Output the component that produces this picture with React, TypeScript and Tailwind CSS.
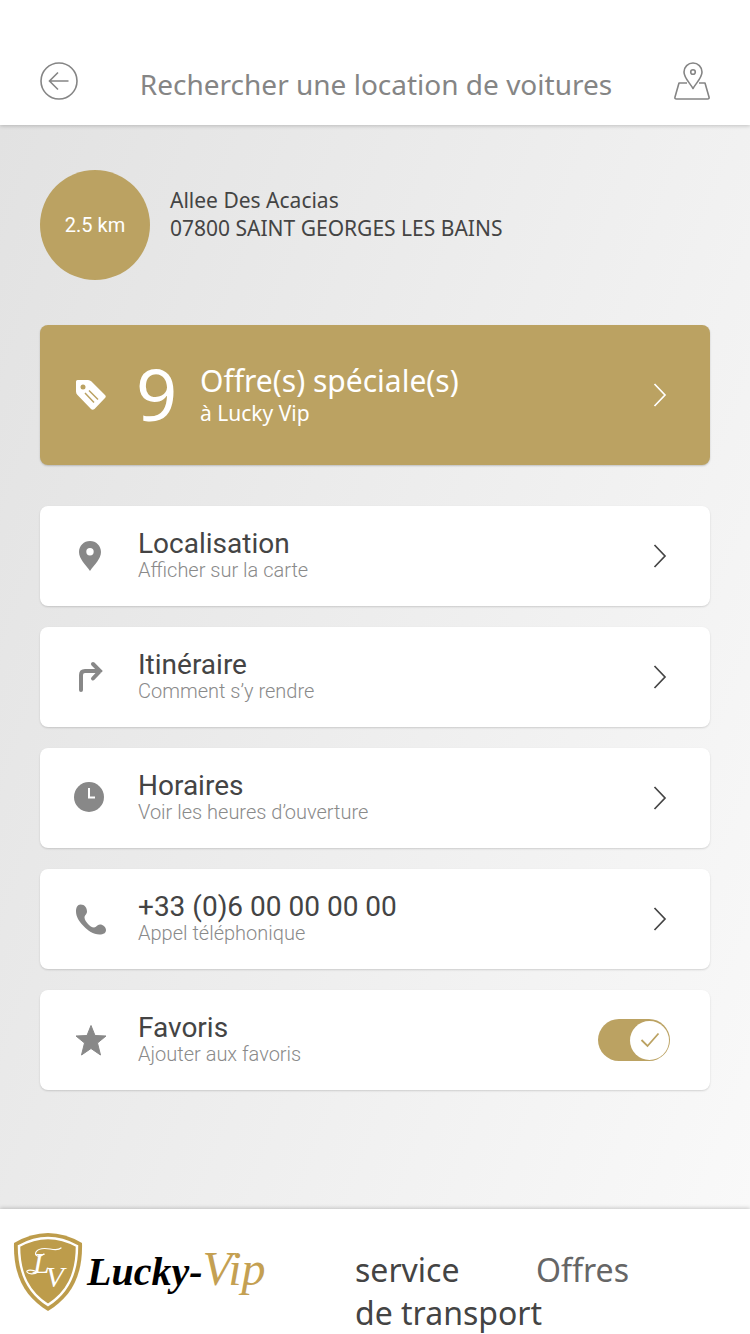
import React, { useState } from 'react';

interface ActionRow {
  id: string;
  title: string;
  subtitle: string;
  href: string;
  icon: React.ReactNode;
}

const ROWS: ActionRow[] = [
  {
    id: 'location',
    title: 'Localisation',
    subtitle: 'Afficher sur la carte',
    href: '#localisation',
    icon: (
      <path
        fillRule="evenodd"
        d="M16 1C9.900 1 5 5.800 5 12c0 7 6.500 12.500 11 19 4.500-6.500 11-12 11-19 0-6.200-4.900-11-11-11zm0 7a3.700 3.700 0 1 1 0 7.400 3.700 3.700 0 0 1 0-7.400z"
      />
    ),
  },
  {
    id: 'route',
    title: 'Itinéraire',
    subtitle: 'Comment s’y rendre',
    href: '#itineraire',
    icon: (
      <path
        d="M7 29V14q0-4 4-4H26M19 3l7 7-7 7.500"
        fill="none"
        stroke="currentColor"
        strokeWidth="4"
        strokeLinecap="round"
      />
    ),
  },
  {
    id: 'hours',
    title: 'Horaires',
    subtitle: 'Voir les heures d’ouverture',
    href: '#horaires',
    icon: (
      <>
        <circle cx="15" cy="15" r="15" />
        <path d="M15 6v9.500h6" fill="none" stroke="white" strokeWidth="2" />
      </>
    ),
  },
  {
    id: 'phone',
    title: '+33 (0)6 00 00 00 00',
    subtitle: 'Appel téléphonique',
    href: 'tel:+33600000000',
    icon: (
      <path d="M6.500 1.500C3.500 1.500 2 4.500 2 8.500c0 5 3 10 7.500 14.500S19 31.500 25.500 31.500c4 0 6.500-1.500 6.500-4.500 0-3-3-5.500-6-5.500-3 0-3.500 3-6 3-2 0-4.500-1.800-6-3.500s-3.500-4-3.500-6.500c0-2.500 2.500-3 2.500-6 0-3.500-2-7-6.500-7z" />
    ),
  },
];

function Chevron({ className }: { className: string }) {
  return (
    <svg viewBox="0 0 14 24" className={`h-6 w-3.5 shrink-0 ${className}`} fill="none" stroke="currentColor" strokeWidth="1.700" aria-hidden="true">
      <path d="M1.500 1l10.500 11L1.500 23" />
    </svg>
  );
}

function RowText({ title, subtitle }: { title: string; subtitle: string }) {
  return (
    <span className="flex flex-1 flex-col pb-1">
      <span className="text-[28px] leading-8 text-[#444444]">{title}</span>
      <span className="text-xl leading-5 font-light text-[#8a8a8a]">{subtitle}</span>
    </span>
  );
}

function Logo() {
  return (
    <a href="#accueil" className="flex items-start gap-1">
      <svg viewBox="0 0 70 78" className="h-[78px] w-[70px] shrink-0" aria-hidden="true">
        <path d="M1 10Q35-10 69 10C70 43 58 64 35 78 12 64 0 43 1 10z" fill="#bd9c4b" />
        <path d="M6 13Q35-3 64 13C64 42 54 60 35 72 16 60 6 42 6 13z" fill="none" stroke="white" strokeWidth="2.500" />
        <text x="20" y="40" fill="white" fontFamily="Liberation Serif, serif" fontStyle="italic" fontSize="30">
          L<tspan dx="-3" dy="14">V</tspan>
        </text>
        {/* Swashes around the monogram */}
        <g fill="none" stroke="white" strokeWidth="1.200" strokeLinecap="round">
          <path d="M31 21c-5 4-10 2-8-2 2-3 8-4 14-3 5 1 9 1 11-1" />
          <path d="M24 39c-5-3-11-2-10 0 2 3 8 2 11 0" />
        </g>
      </svg>
      <span className="pt-2.5 font-['Liberation_Serif',serif] text-[40px] leading-[52px] font-bold whitespace-nowrap text-black italic">
        Lucky-<span className="text-5xl leading-[52px] font-normal text-[#c4a052]">Vip</span>
      </span>
    </a>
  );
}

export default function App() {
  const [favorite, setFavorite] = useState(true);

  return (
    <div className="flex min-h-screen flex-col bg-white font-['Roboto',sans-serif]">
      <header className="relative z-10 flex h-[125px] items-center justify-between bg-white px-10 pt-9 text-[#858585] shadow-[0_1px_4px_rgba(0,0,0,0.2)]">
        <button type="button" aria-label="Retour">
          <svg viewBox="0 0 38 38" className="size-[38px]" fill="none" stroke="currentColor" strokeWidth="1.600">
            <circle cx="19" cy="19" r="18" />
            <path d="M28.500 19H10M18 10.500L9.500 19l8.500 8.500" />
          </svg>
        </button>
        <h1 className="pt-1.5 font-['Noto_Sans',sans-serif] text-[28px] leading-10">Rechercher une location de voitures</h1>
        <button type="button" aria-label="Voir la carte">
          <svg viewBox="0 0 36 38" className="h-[38px] w-9" fill="none" stroke="currentColor" strokeWidth="1.600" strokeLinejoin="round">
            <path d="M19 26.500C16 21 10 16 10 10a9 9 0 0 1 18 0c0 6-6 11-9 16.500z" />
            <circle cx="19" cy="10" r="2.300" />
            <path d="M13 21H5L1 35q-.5 2 1.500 2h31q2 0 1.500-2l-4-14h-6" />
          </svg>
        </button>
      </header>

      <main className="flex flex-1 flex-col bg-linear-[110deg] from-[#e2e2e2] to-[#f9f9f9] px-10 pt-[45px] pb-10">
        {/* Distance and address */}
        <section className="flex items-start gap-5">
          <div className="flex size-[110px] shrink-0 items-center justify-center rounded-full bg-[#bba262] text-xl text-white">
            2.5 km
          </div>
          <address className="pt-4 font-['Noto_Sans',sans-serif] text-[21px] leading-7 text-[#444444] not-italic">
            Allee Des Acacias
            <br />
            07800 SAINT GEORGES LES BAINS
          </address>
        </section>

        {/* Special offers */}
        <a
          href="#offres-speciales"
          className="mt-[45px] flex h-[140px] items-center rounded-lg bg-[#bba262] pr-[43px] pl-9 font-['Noto_Sans',sans-serif] text-white shadow-[0_1px_2px_rgba(0,0,0,0.2)]"
        >
          <svg viewBox="0 0 30 30" className="size-[30px] shrink-0" aria-hidden="true">
            <path d="M1.500 0H12q2 0 3.500 1.500L29 15q1.500 1.500 0 3L18.500 29q-2 1.500-3.500 0L1.500 15Q0 13.500 0 11.500v-10Q0 0 1.500 0z" fill="white" />
            <circle cx="7" cy="7" r="2.500" fill="#bba262" />
            <path d="M9 13l9 9.500M13 10.500l9 9" stroke="#bba262" strokeWidth="1.500" />
          </svg>
          <span className="w-[94px] pb-1 pl-[30px] text-[72px] leading-[70px]">9</span>
          <span className="flex flex-1 flex-col">
            <span className="text-[30px] leading-9">Offre(s) spéciale(s)</span>
            <span className="text-[21px] leading-7">à Lucky Vip</span>
          </span>
          <Chevron className="text-white" />
        </a>

        {/* Actions */}
        <ul className="mt-[41px] flex flex-col gap-[21px]">
          {ROWS.map((row) => (
            <li key={row.id}>
              <a href={row.href} className="flex h-[100px] items-center rounded-lg bg-white pr-[43px] pl-[34px] shadow-[0_1px_2px_rgba(0,0,0,0.15)]">
                <svg viewBox="0 0 32 32" className="mr-8 size-8 shrink-0 text-[#888888]" fill="currentColor" aria-hidden="true">
                  {row.icon}
                </svg>
                <RowText title={row.title} subtitle={row.subtitle} />
                <Chevron className="text-[#444444]" />
              </a>
            </li>
          ))}
          <li>
            <label htmlFor="favorite" className="flex h-[100px] items-center rounded-lg bg-white pr-10 pl-[34px] shadow-[0_1px_2px_rgba(0,0,0,0.15)]">
              <svg viewBox="0 0 32 32" className="mr-8 size-8 shrink-0 text-[#888888]" fill="currentColor" stroke="currentColor" strokeLinejoin="round" aria-hidden="true">
                <path d="M17 1.500l4 10 11 .5-8.500 7 3 12-9.500-6.500-9.500 6.500 3-12L2 12l11-.5z" />
              </svg>
              <RowText title="Favoris" subtitle="Ajouter aux favoris" />
              <span className="grid items-center">
                <input
                  id="favorite"
                  type="checkbox"
                  checked={favorite}
                  onChange={(e) => setFavorite(e.target.checked)}
                  className="peer col-start-1 row-start-1 h-[42px] w-[72px] appearance-none rounded-full bg-[#cccccc] checked:bg-[#bba262]"
                />
                <span className="pointer-events-none z-10 col-start-1 row-start-1 ml-px flex size-[39px] items-center justify-center rounded-full bg-white text-[#bba262] peer-checked:ml-8">
                  <svg viewBox="0 0 20 16" className="h-4 w-5" fill="none" stroke="currentColor" strokeWidth="1.800" aria-hidden="true">
                    <path d="M1.500 8l6 6L18.500 1.500" />
                  </svg>
                </span>
              </span>
            </label>
          </li>
        </ul>
      </main>

      <footer className="relative z-10 flex items-start justify-between bg-white pl-[13px] shadow-[0_-1px_4px_rgba(0,0,0,0.2)]">
        <div className="pt-6">
          <Logo />
        </div>
        <nav className="flex w-[395px] pt-[39px] font-['Noto_Sans',sans-serif] text-[32px] leading-[43px]">
          <a href="#service" className="w-[181px] whitespace-nowrap text-[#444444]">
            service
            <br />
            de transport
          </a>
          <a href="#offres" className="text-[#666666]">
            Offres
          </a>
        </nav>
      </footer>
    </div>
  );
}
